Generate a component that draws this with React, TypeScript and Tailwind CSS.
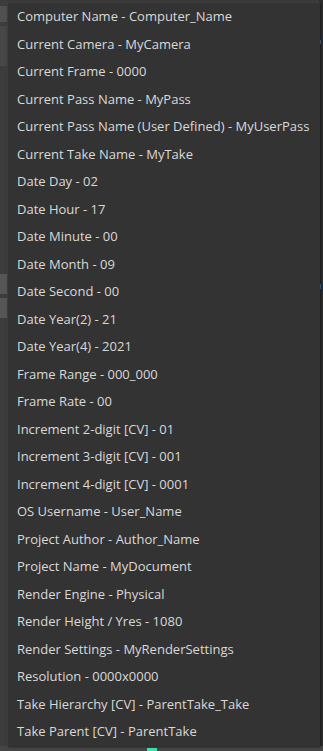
import React from "react";

const items = [
  "Computer Name - Computer_Name",
  "Current Camera - MyCamera",
  "Current Frame - 0000",
  "Current Pass Name - MyPass",
  "Current Pass Name (User Defined) - MyUserPass",
  "Current Take Name - MyTake",
  "Date Day - 02",
  "Date Hour - 17",
  "Date Minute - 00",
  "Date Month - 09",
  "Date Second - 00",
  "Date Year(2) - 21",
  "Date Year(4) - 2021",
  "Frame Range - 000_000",
  "Frame Rate - 00",
  "Increment 2-digit [CV] - 01",
  "Increment 3-digit [CV] - 001",
  "Increment 4-digit [CV] - 0001",
  "OS Username - User_Name",
  "Project Author - Author_Name",
  "Project Name - MyDocument",
  "Render Engine - Physical",
  "Render Height / Yres - 1080",
  "Render Settings - MyRenderSettings",
  "Resolution - 0000x0000",
  "Take Hierarchy [CV] - ParentTake_Take",
  "Take Parent [CV] - ParentTake",
];

export default function App() {
  return (
    <div
      className="relative w-[323px] h-[751px] overflow-hidden bg-[#3c3c3c] flex flex-col"
      style={{ fontFamily: '"Open Sans", "Noto Sans", sans-serif' }}
    >
      {/* background application behind the menu */}
      <div className="flex-1 flex">
        <div className="w-[7px] flex flex-col gap-[4px] pt-[6px]">
          <div className="h-[16px] bg-[#505050]" />
          <div className="h-[40px] bg-[#474747]" />
          <div className="h-[200px]" />
          <div className="h-[20px] bg-[#555555]" />
          <div className="h-[20px] bg-[#555555]" />
        </div>
        <div className="flex-1" />
        <div className="w-[4px] bg-[#2e2e2e] flex flex-col gap-[240px] pt-[40px]">
          <div className="h-[4px] w-[2px] bg-[#4a7fb0]" />
          <div className="h-[5px] w-[2px] bg-[#3f7cc0]" />
        </div>
      </div>
      <div className="h-[5px] bg-[#454545] flex pl-[147px] items-end">
        <div className="w-[10px] h-[3px] bg-[#3fe0b0]" />
      </div>

      {/* dropdown menu overlay */}
      <div className="absolute left-[7px] top-[2px] w-[313px] h-[744px] bg-[#333333] border-l border-t border-[#3d3d3d] shadow-[1px_1px_2px_rgba(0,0,0,0.5)]">
        <ul className="flex flex-col">
          {items.map((t) => (
            <li
              key={t}
              className="h-[27.5px] flex items-center pl-[9px] text-[13px] text-[#d9d9d9] whitespace-nowrap"
            >
              {t}
            </li>
          ))}
        </ul>
      </div>
    </div>
  );
}
